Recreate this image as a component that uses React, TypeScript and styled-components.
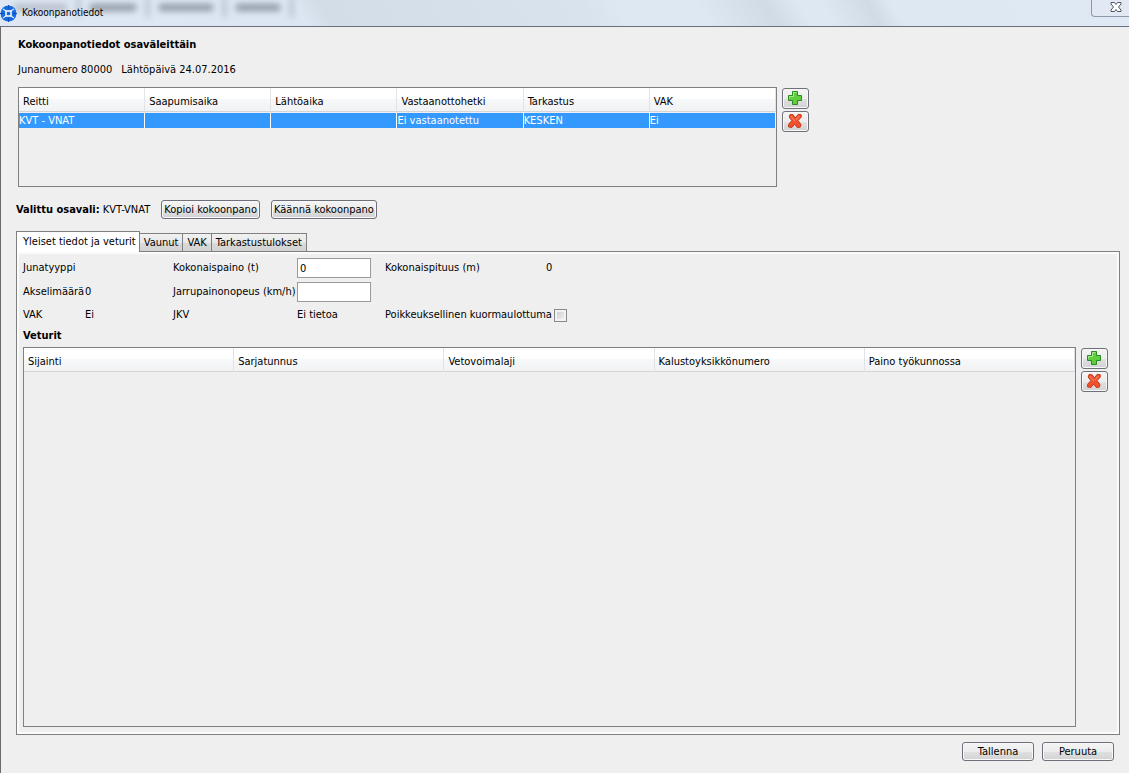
import React from "react";
import styled, { createGlobalStyle, css } from "styled-components";

const GlobalStyle = createGlobalStyle`
  * { box-sizing: border-box; }
  body { margin: 0; background: #efefef; }
  body, button, input, table {
    font-family: "DejaVu Sans Condensed", "DejaVu Sans", Tahoma, sans-serif;
    font-size: 11px;
    line-height: 14px;
    color: #000;
  }
`;

const Window = styled.div`
  display: flex;
  flex-direction: column;
  min-height: 100vh;
  border-left: 1px solid #6a6a70;
  background: #efefef;
`;

const TitleBar = styled.header`
  position: relative;
  display: flex;
  align-items: center;
  height: 27px;
  margin-left: -1px;
  overflow: hidden;
  border-bottom: 1px solid #6b6d7c;
  background: linear-gradient(
    60deg,
    #dfe7f3 0%, #dce6f2 27%, #d3dde7 29%, #d9e3ed 52%, #dee8f2 55%,
    #dee8f3 62%, #d1dbe6 68%, #dee8f3 71%, #dee8f3 73%, #d0dbe6 77%, #dee8f3 79%, #dfe8f3 100%
  );
`;

/* Tabs of the parent window, seen out of focus through the glass title bar. */
const Behind = styled.div`
  position: absolute;
  top: -3px;
  left: 14px;
  display: flex;
  align-items: center;
  gap: 10px;
  filter: blur(3px);
`;

const BehindText = styled.span<{ $width: number; $faint?: boolean }>`
  width: ${(p) => p.$width}px;
  height: 7px;
  background: ${(p) => (p.$faint ? "#b4bdc9" : "#8f98a5")};
`;

const BehindEdge = styled.span`
  width: 3px;
  height: 20px;
  background: #a9b3c1;
`;

const TitleText = styled.h1`
  position: relative;
  margin: 0 0 0 5px;
  font-size: 10px;
  font-weight: 400;
  line-height: 14px;
`;

const AppIcon = styled.svg`
  position: relative;
  flex: none;
`;

const CloseButton = styled.button`
  display: flex;
  justify-content: center;
  align-self: flex-start;
  width: 38px;
  height: 17px;
  margin-left: auto;
  padding: 1px 0 0 10px;
  border: 1px solid #8d98ab;
  border-width: 0 0 1px 1px;
  border-radius: 0 0 0 4px;
  background: #e3e9f3;
`;

const Content = styled.main`
  display: flex;
  flex: 1;
  flex-direction: column;
  padding: 8px 9px 12px 15px;
`;

const Heading = styled.h2<{ $indent?: boolean }>`
  margin: 0 0 1px;
  padding-left: ${(p) => (p.$indent ? "2px" : "0")};
  font-size: 11px;
  line-height: 20px;
`;

const Meta = styled.p`
  display: flex;
  gap: 9px;
  margin: 7px 0 10px 2px;
`;

const TableRow = styled.div<{ $grow?: boolean }>`
  display: flex;
  flex: ${(p) => (p.$grow ? "1" : "none")};
  gap: 5px;
`;

const TableFrame = styled.div<{ $compact?: boolean }>`
  flex: 1;
  border: 1px solid #808080;
  ${(p) =>
    p.$compact &&
    css`
      max-width: 759px;
      min-height: 100px;
      margin-left: 2px;
    `}
`;

const DataTable = styled.table`
  width: 100%;
  table-layout: fixed;
  border-collapse: separate;
  border-spacing: 0;
`;

const HeadCell = styled.th`
  height: 24px;
  padding: 4px 4px 0;
  border-right: 1px solid #e0e3e8;
  border-bottom: 1px solid #d5d5d5;
  background: linear-gradient(#fff 45%, #f7f8fa 50%, #f1f2f4);
  font-weight: 400;
  text-align: left;
`;

const SelectedCell = styled.td`
  height: 16px;
  padding: 0;
  border-top: 1px solid #efefef;
  border-right: 1px solid #fff;
  background: #3399ff;
  color: #fff;
`;

const IconStack = styled.div`
  display: flex;
  flex-direction: column;
  gap: 2px;
  padding-top: 1px;
`;

const buttonFace = css`
  border: 1px solid #70707a;
  border-radius: 3px;
  background: linear-gradient(#f4f4f4 0%, #ececec 50%, #dfdfdf 56%, #d2d2d4 100%);
  box-shadow: inset 0 0 0 1px #f8f8f8;
`;

const IconButton = styled.button`
  display: flex;
  align-items: center;
  justify-content: center;
  width: 27px;
  height: 21px;
  padding: 0 1px 1px 0;
  ${buttonFace}
`;

const TextButton = styled.button<{ $wide?: boolean }>`
  height: 19px;
  padding: 0 2px;
  min-width: ${(p) => (p.$wide ? "72px" : "0")};
  white-space: nowrap;
  ${buttonFace}
`;

const Selection = styled.div`
  display: flex;
  align-items: center;
  gap: 11px;
  margin: 13px 0 12px;
`;

const Tabs = styled.div`
  position: relative;
  z-index: 1;
  display: flex;
  align-items: flex-end;
  margin-bottom: -1px;
`;

const Tab = styled.button<{ $active?: boolean }>`
  height: 19px;
  padding: 0 4px;
  border: 1px solid #808080;
  border-left-width: 0;
  background: linear-gradient(#f1f1f1 0%, #e8e8e8 50%, #d9d9d9 55%, #d2d2d2 100%);
  white-space: nowrap;
  ${(p) =>
    p.$active &&
    css`
      height: 21px;
      padding: 0 3px 0 6px;
      border-left-width: 1px;
      border-bottom: 0;
      background: #fff;
    `}
`;

const Panel = styled.section`
  display: flex;
  flex: 1;
  flex-direction: column;
  padding: 4px 11px 7px 6px;
  border: 1px solid #808080;
  box-shadow: inset 0 0 0 2px #fbfbfb;
`;

const Form = styled.div`
  display: grid;
  grid-template-columns: 62px 88px 124px 88px 161px auto;
  grid-template-rows: 24px 24px 22px;
  align-items: center;
  justify-content: start;
  white-space: nowrap;
`;

const Cell = styled.span<{ $span?: number }>`
  grid-column: span ${(p) => p.$span ?? 1};
`;

const CheckGroup = styled.div`
  display: flex;
  grid-column: span 2;
  align-items: center;
  gap: 2px;
`;

const Field = styled.input`
  width: 74px;
  height: 20px;
  padding: 0 2px;
  border: 1px solid #9a9a9a;
  background: #fff;
`;

const Check = styled.input`
  appearance: none;
  width: 13px;
  height: 13px;
  margin: 0;
  border: 1px solid #8a8a8a;
  background: linear-gradient(135deg, #c6c9cc, #f6f6f6);
  box-shadow: inset 0 0 0 2px #f2f2f2;
`;

const Footer = styled.footer`
  display: flex;
  justify-content: flex-end;
  gap: 8px;
  padding: 7px 6px 0 0;
`;

const AddIcon = () => (
  <svg width="16" height="16" viewBox="0 0 16 16" aria-hidden="true">
    <path d="M5.5 1.5h5v4h4v5h-4v4h-5v-4h-4v-5h4z" fill="#5fce3e" stroke="#2c8a22" strokeLinejoin="round" />
    <path d="M6.5 6.5v-4h3M2.5 8.500v-2h4" fill="none" stroke="#a5ea8c" />
  </svg>
);

const RemoveIcon = () => (
  <svg width="16" height="16" viewBox="0 0 16 16" aria-hidden="true">
    <path
      d="M3 1.500L6.200 1.800 8.300 5 11.200 1.300 14.300 1.800 14.200 4.200 11 7.600 14 11.600 13.200 14.200 10.200 14.400 7.700 11 5 14.400 1.600 14 1.600 11.400 4.800 7.600 2.200 4z"
      fill="#f0502c"
      stroke="#c8381e"
      strokeLinejoin="round"
    />
    <path d="M3.800 3l4 5.200M12.400 3L9 7" fill="none" stroke="#ff9070" />
  </svg>
);

const AddRemove = ({ target }: { target: string }) => (
  <IconStack>
    <IconButton type="button" aria-label={`Lisää ${target}`}><AddIcon /></IconButton>
    <IconButton type="button" aria-label={`Poista ${target}`}><RemoveIcon /></IconButton>
  </IconStack>
);

const sectionColumns = ["Reitti", "Saapumisaika", "Lähtöaika", "Vastaanottohetki", "Tarkastus", "VAK"];
const sectionRow = ["KVT - VNAT", "", "", "Ei vastaanotettu", "KESKEN", "Ei"];
const engineColumns = ["Sijainti", "Sarjatunnus", "Vetovoimalaji", "Kalustoyksikkönumero", "Paino työkunnossa"];

export default function App() {
  return (
    <Window>
      <GlobalStyle />
      <TitleBar>
        <Behind aria-hidden="true">
          <BehindText $width={53} $faint />
          <BehindEdge />
          <BehindText $width={46} />
          <BehindEdge />
          <BehindText $width={54} />
          <BehindEdge />
          <BehindText $width={44} />
          <BehindEdge />
        </Behind>
        <AppIcon width="17" height="17" viewBox="0 0 17 17" aria-hidden="true">
          <circle cx="8.500" cy="8.500" r="8" fill="#176ae0" />
          <path d="M6 6L3 4M11 6l3-2M6 11l-3 2M11 11l3 2" stroke="#cfe2fa" strokeWidth="1.500" />
          <path d="M8.500 0v4M8.500 13v4M0 8.500h4M13 8.500h4" stroke="#0c4fb8" strokeWidth="1" />
          <rect x="6" y="6" width="5" height="5" fill="#176ae0" stroke="#fff" strokeWidth="1.500" />
        </AppIcon>
        <TitleText>Kokoonpanotiedot</TitleText>
        <CloseButton type="button" aria-label="Sulje">
          <svg width="12" height="12" viewBox="0 0 12 12" aria-hidden="true">
            <path
              d="M1 1.500h3.500L6 3.500 7.500 1.500H11v1.500L8.500 6 11 9v1.500H7.500L6 8.500 4.500 10.500H1V9l2.500-3L1 3z"
              fill="#fff"
              stroke="#50566a"
              strokeLinejoin="round"
            />
          </svg>
        </CloseButton>
      </TitleBar>
      <Content>
        <Heading $indent>Kokoonpanotiedot osaväleittäin</Heading>
        <Meta>
          <span>Junanumero 80000</span>
          <span>Lähtöpäivä 24.07.2016</span>
        </Meta>
        <TableRow>
          <TableFrame $compact>
            <DataTable>
              <thead>
                <tr>{sectionColumns.map((name) => <HeadCell key={name}>{name}</HeadCell>)}</tr>
              </thead>
              <tbody>
                <tr>{sectionRow.map((value, i) => <SelectedCell key={sectionColumns[i]}>{value}</SelectedCell>)}</tr>
              </tbody>
            </DataTable>
          </TableFrame>
          <AddRemove target="osaväli" />
        </TableRow>
        <Selection>
          <span><b>Valittu osavali:</b> KVT-VNAT</span>
          <TextButton type="button">Kopioi kokoonpano</TextButton>
          <TextButton type="button">Käännä kokoonpano</TextButton>
        </Selection>
        <Tabs role="tablist">
          <Tab type="button" role="tab" aria-selected="true" $active>Yleiset tiedot ja veturit</Tab>
          <Tab type="button" role="tab" aria-selected="false">Vaunut</Tab>
          <Tab type="button" role="tab" aria-selected="false">VAK</Tab>
          <Tab type="button" role="tab" aria-selected="false">Tarkastustulokset</Tab>
        </Tabs>
        <Panel role="tabpanel">
          <Form>
            <Cell $span={2}>Junatyyppi</Cell>
            <label htmlFor="weight">Kokonaispaino (t)</label>
            <Field id="weight" type="text" defaultValue="0" />
            <Cell>Kokonaispituus (m)</Cell>
            <Cell>0</Cell>
            <Cell>Akselimäärä</Cell>
            <Cell>0</Cell>
            <label htmlFor="speed">Jarrupainonopeus (km/h)</label>
            <Field id="speed" type="text" />
            <Cell $span={2} />
            <Cell>VAK</Cell>
            <Cell>Ei</Cell>
            <Cell>JKV</Cell>
            <Cell>Ei tietoa</Cell>
            <CheckGroup>
              <label htmlFor="load">Poikkeuksellinen kuormaulottuma</label>
              <Check id="load" type="checkbox" />
            </CheckGroup>
          </Form>
          <Heading>Veturit</Heading>
          <TableRow $grow>
            <TableFrame>
              <DataTable>
                <thead>
                  <tr>{engineColumns.map((name) => <HeadCell key={name}>{name}</HeadCell>)}</tr>
                </thead>
              </DataTable>
            </TableFrame>
            <AddRemove target="veturi" />
          </TableRow>
        </Panel>
        <Footer>
          <TextButton type="button" $wide>Tallenna</TextButton>
          <TextButton type="button" $wide>Peruuta</TextButton>
        </Footer>
      </Content>
    </Window>
  );
}
